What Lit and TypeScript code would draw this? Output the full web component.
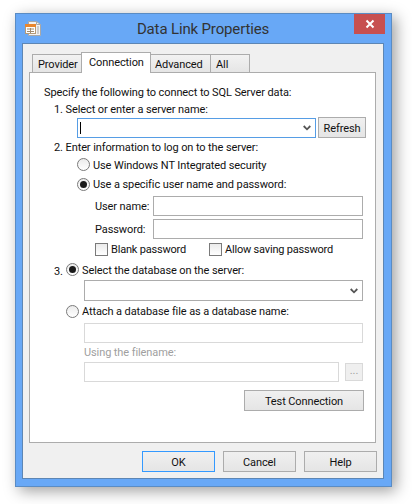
import { LitElement, html, css } from "lit";
import { customElement } from "lit/decorators.js";

const chevron = html`<svg class="chev" width="8" height="6" viewBox="0 0 8 6"><path d="M.7 1 4 4.3 7.3 1" fill="none" stroke="#555" stroke-width="1.8"/></svg>`;

@customElement("app-root")
export class AppRoot extends LitElement {
  static styles = css`
    :host { display: block; width: 412px; height: 504px; background: #fff; overflow: hidden;
      font-family: "Roboto", "Liberation Sans", sans-serif; font-size: 11px; letter-spacing: -0.1px; color: #111; padding: 13px 0 0 15px; box-sizing: border-box; }
    * { box-sizing: border-box; }
    .window { width: 377px; height: 474px; background: #68a8f6; border: 1px solid #5a8cc4;
      box-shadow: 4px 4px 14px rgba(0,0,0,.38); display: flex; flex-direction: column; padding: 0 7px 7px 6px; }
    .titlebar { height: 29px; flex: none; display: flex; align-items: flex-start; position: relative; }
    .appicon { margin: 7px 0 0 3px; flex: none; }
    .title { position: absolute; left: 0; right: 0; top: 4px; text-align: center; font-size: 15px; letter-spacing: -0.15px; line-height: 22px; color: #333; }
    .close { position: absolute; right: -1px; top: 0; width: 31px; height: 20px; background: #c75050; display: flex; align-items: center; justify-content: center; }
    .client { flex: 1; background: #f0f0f0; border: 1px solid #5d86b4; display: flex; flex-direction: column; padding: 0 7px 0 6px; min-height: 0; }
    .tabs { display: flex; align-items: flex-end; height: 28px; padding-left: 3px; flex: none; position: relative; z-index: 1; white-space: nowrap; }
    .tab { height: 18px; border: 1px solid #acacac; border-bottom: 0; background: linear-gradient(#f2f2f2, #e5e5e5); line-height: 19px; flex: none; }
    .tab.active { height: 21px; background: #fff; margin-bottom: -1px; line-height: 20px; position: relative; z-index: 2; }
    .t-provider { width: 50px; padding-left: 5px; }
    .t-connection { width: 70px; padding-left: 7px; margin-left: -1px; }
    .t-advanced { width: 61px; padding-left: 4px; margin-left: -1px; }
    .t-all { width: 40px; padding-left: 5px; margin-left: -1px; }
    .panel { height: 371px; flex: none; background: #fff; border: 1px solid #acacac; display: flex; flex-direction: column; padding: 11px 0 0 14px; }
    .line { height: 16px; line-height: 16px; white-space: nowrap; display: flex; align-items: center; flex: none; padding-top: 1px; }
    .sub { padding-left: 10px; margin-top: 1px; }
    .indent { padding-left: 33px; }
    .ctl { height: 21px; border: 1px solid #acacac; background: #fff; flex: none; }
    .combo { display: flex; align-items: center; justify-content: flex-end; padding-right: 4px; position: relative; }
    .chev { flex: none; }
    .btn { border: 1px solid #acacac; background: linear-gradient(#f0f0f0, #e5e5e5); display: flex; align-items: center; justify-content: center; flex: none; padding-top: 1px; }
    .serverrow { display: flex; margin: 0 0 0 33px; height: 21px; flex: none; gap: 2px; align-items: flex-end; }
    .servercombo { width: 239px; height: 20px; border-color: #569de5; }
    .caret { position: absolute; left: 2px; top: 3px; width: 1px; height: 12px; background: #000; }
    .refresh { width: 48px; height: 21px; }
    .radio { width: 13px; height: 13px; border-radius: 50%; border: 1px solid #7a7a7a; background: linear-gradient(#ebebeb, #fff); flex: none; display: flex; align-items: center; justify-content: center; margin: -2px 3px 0 0; }
    .radio.low { margin-top: 0; }
    .radio.on::after { content: ""; width: 7px; height: 7px; border-radius: 50%; background: #1a1a1a; }
    .r1 { margin-top: 2px; }
    .r2 { margin-top: 3px; }
    .field { display: flex; align-items: center; height: 20px; flex: none; padding-left: 51px; margin-top: 3px; white-space: nowrap; }
    .field.first { margin-top: 4px; }
    .field label { width: 58px; flex: none; padding-top: 1px; }
    .input { width: 210px; height: 20px; }
    .checks { padding-left: 51px; margin-top: 2px; letter-spacing: -0.2px; }
    .check { width: 13px; height: 13px; border: 1px solid #7a7a7a; background: linear-gradient(#ebebeb, #fff); flex: none; margin-right: 3px; }
    .chk1 { width: 114px; display: flex; align-items: center; flex: none; }
    .three { margin-top: 5px; padding-left: 10px; }
    .num { width: 12px; flex: none; padding-top: 2px; }
    .dbcombo { width: 279px; margin: 2px 0 0 40px; }
    .attach { margin-top: 2px; padding-left: 22px; }
    .disabled { border-color: #d9d9d9; }
    .dis-in1 { width: 279px; height: 20px; margin: 4px 0 0 40px; }
    .using { margin: 1px 0 0 40px; color: #a0a0a0; }
    .filerow { display: flex; align-items: center; gap: 6px; margin: 2px 0 0 40px; height: 20px; flex: none; }
    .dis-in2 { width: 255px; height: 20px; }
    .dots { width: 18px; height: 18px; border: 1px solid #d9d9d9; background: #efefef; color: #a0a0a0; font-size: 11px; line-height: 14px; text-align: center; flex: none; }
    .test { width: 120px; height: 21px; margin: 8px 0 0 200px; }
    .footer { flex: 1; display: flex; justify-content: flex-end; gap: 8px; padding: 8px 0 0; margin-right: -1px; }
    .fbtn { width: 73px; height: 21px; }
    .fbtn.primary { border-color: #3399ff; }
  `;

  render() {
    return html`
      <div class="window">
        <div class="titlebar">
          <svg class="appicon" width="16" height="15" viewBox="0 0 16 15">
            <path d="M3.5 0.5h8l4 3v11h-12z" fill="#f2f2f2" stroke="#a8a8a8"/>
            <path d="M11.5 0.5v3h4M13 5v8" stroke="#a8a8a8" fill="none"/>
            <rect x="0.5" y="3.5" width="10" height="9" fill="#fff" stroke="#b59a78"/>
            <rect x="0" y="3" width="11" height="3" fill="#e8862e"/>
            <path d="M2 8h7M2 10.5h7M5.5 7v5" stroke="#a08c70" fill="none"/>
          </svg>
          <div class="title">Data Link Properties</div>
          <div class="close">
            <svg width="10" height="10" viewBox="0 0 10 10"><path d="M1.5 1.5l7 7M8.5 1.5l-7 7" stroke="#fff" stroke-width="2"/></svg>
          </div>
        </div>
        <div class="client">
          <div class="tabs">
            <div class="tab t-provider">Provider</div>
            <div class="tab active t-connection">Connection</div>
            <div class="tab t-advanced">Advanced</div>
            <div class="tab t-all">All</div>
          </div>
          <div class="panel">
            <div class="line">Specify the following to connect to SQL Server data:</div>
            <div class="line sub">1. Select or enter a server name:</div>
            <div class="serverrow">
              <div class="ctl combo servercombo"><span class="caret"></span>${chevron}</div>
              <div class="btn refresh">Refresh</div>
            </div>
            <div class="line sub">2. Enter information to log on to the server:</div>
            <div class="line indent r1"><span class="radio"></span>Use Windows NT Integrated security</div>
            <div class="line indent r2"><span class="radio low on"></span>Use a specific user name and password:</div>
            <div class="field first"><label>User name:</label><div class="ctl input"></div></div>
            <div class="field"><label>Password:</label><div class="ctl input"></div></div>
            <div class="line checks">
              <span class="chk1"><span class="check"></span>Blank password</span>
              <span class="check"></span>Allow saving password
            </div>
            <div class="line three"><span class="num">3.</span><span class="radio on"></span>Select the database on the server:</div>
            <div class="ctl combo dbcombo">${chevron}</div>
            <div class="line attach"><span class="radio low"></span>Attach a database file as a database name:</div>
            <div class="ctl disabled dis-in1"></div>
            <div class="line using">Using the filename:</div>
            <div class="filerow"><div class="ctl disabled dis-in2"></div><div class="dots">...</div></div>
            <div class="btn test">Test Connection</div>
          </div>
          <div class="footer">
            <div class="btn fbtn primary">OK</div>
            <div class="btn fbtn">Cancel</div>
            <div class="btn fbtn">Help</div>
          </div>
        </div>
      </div>
    `;
  }
}
